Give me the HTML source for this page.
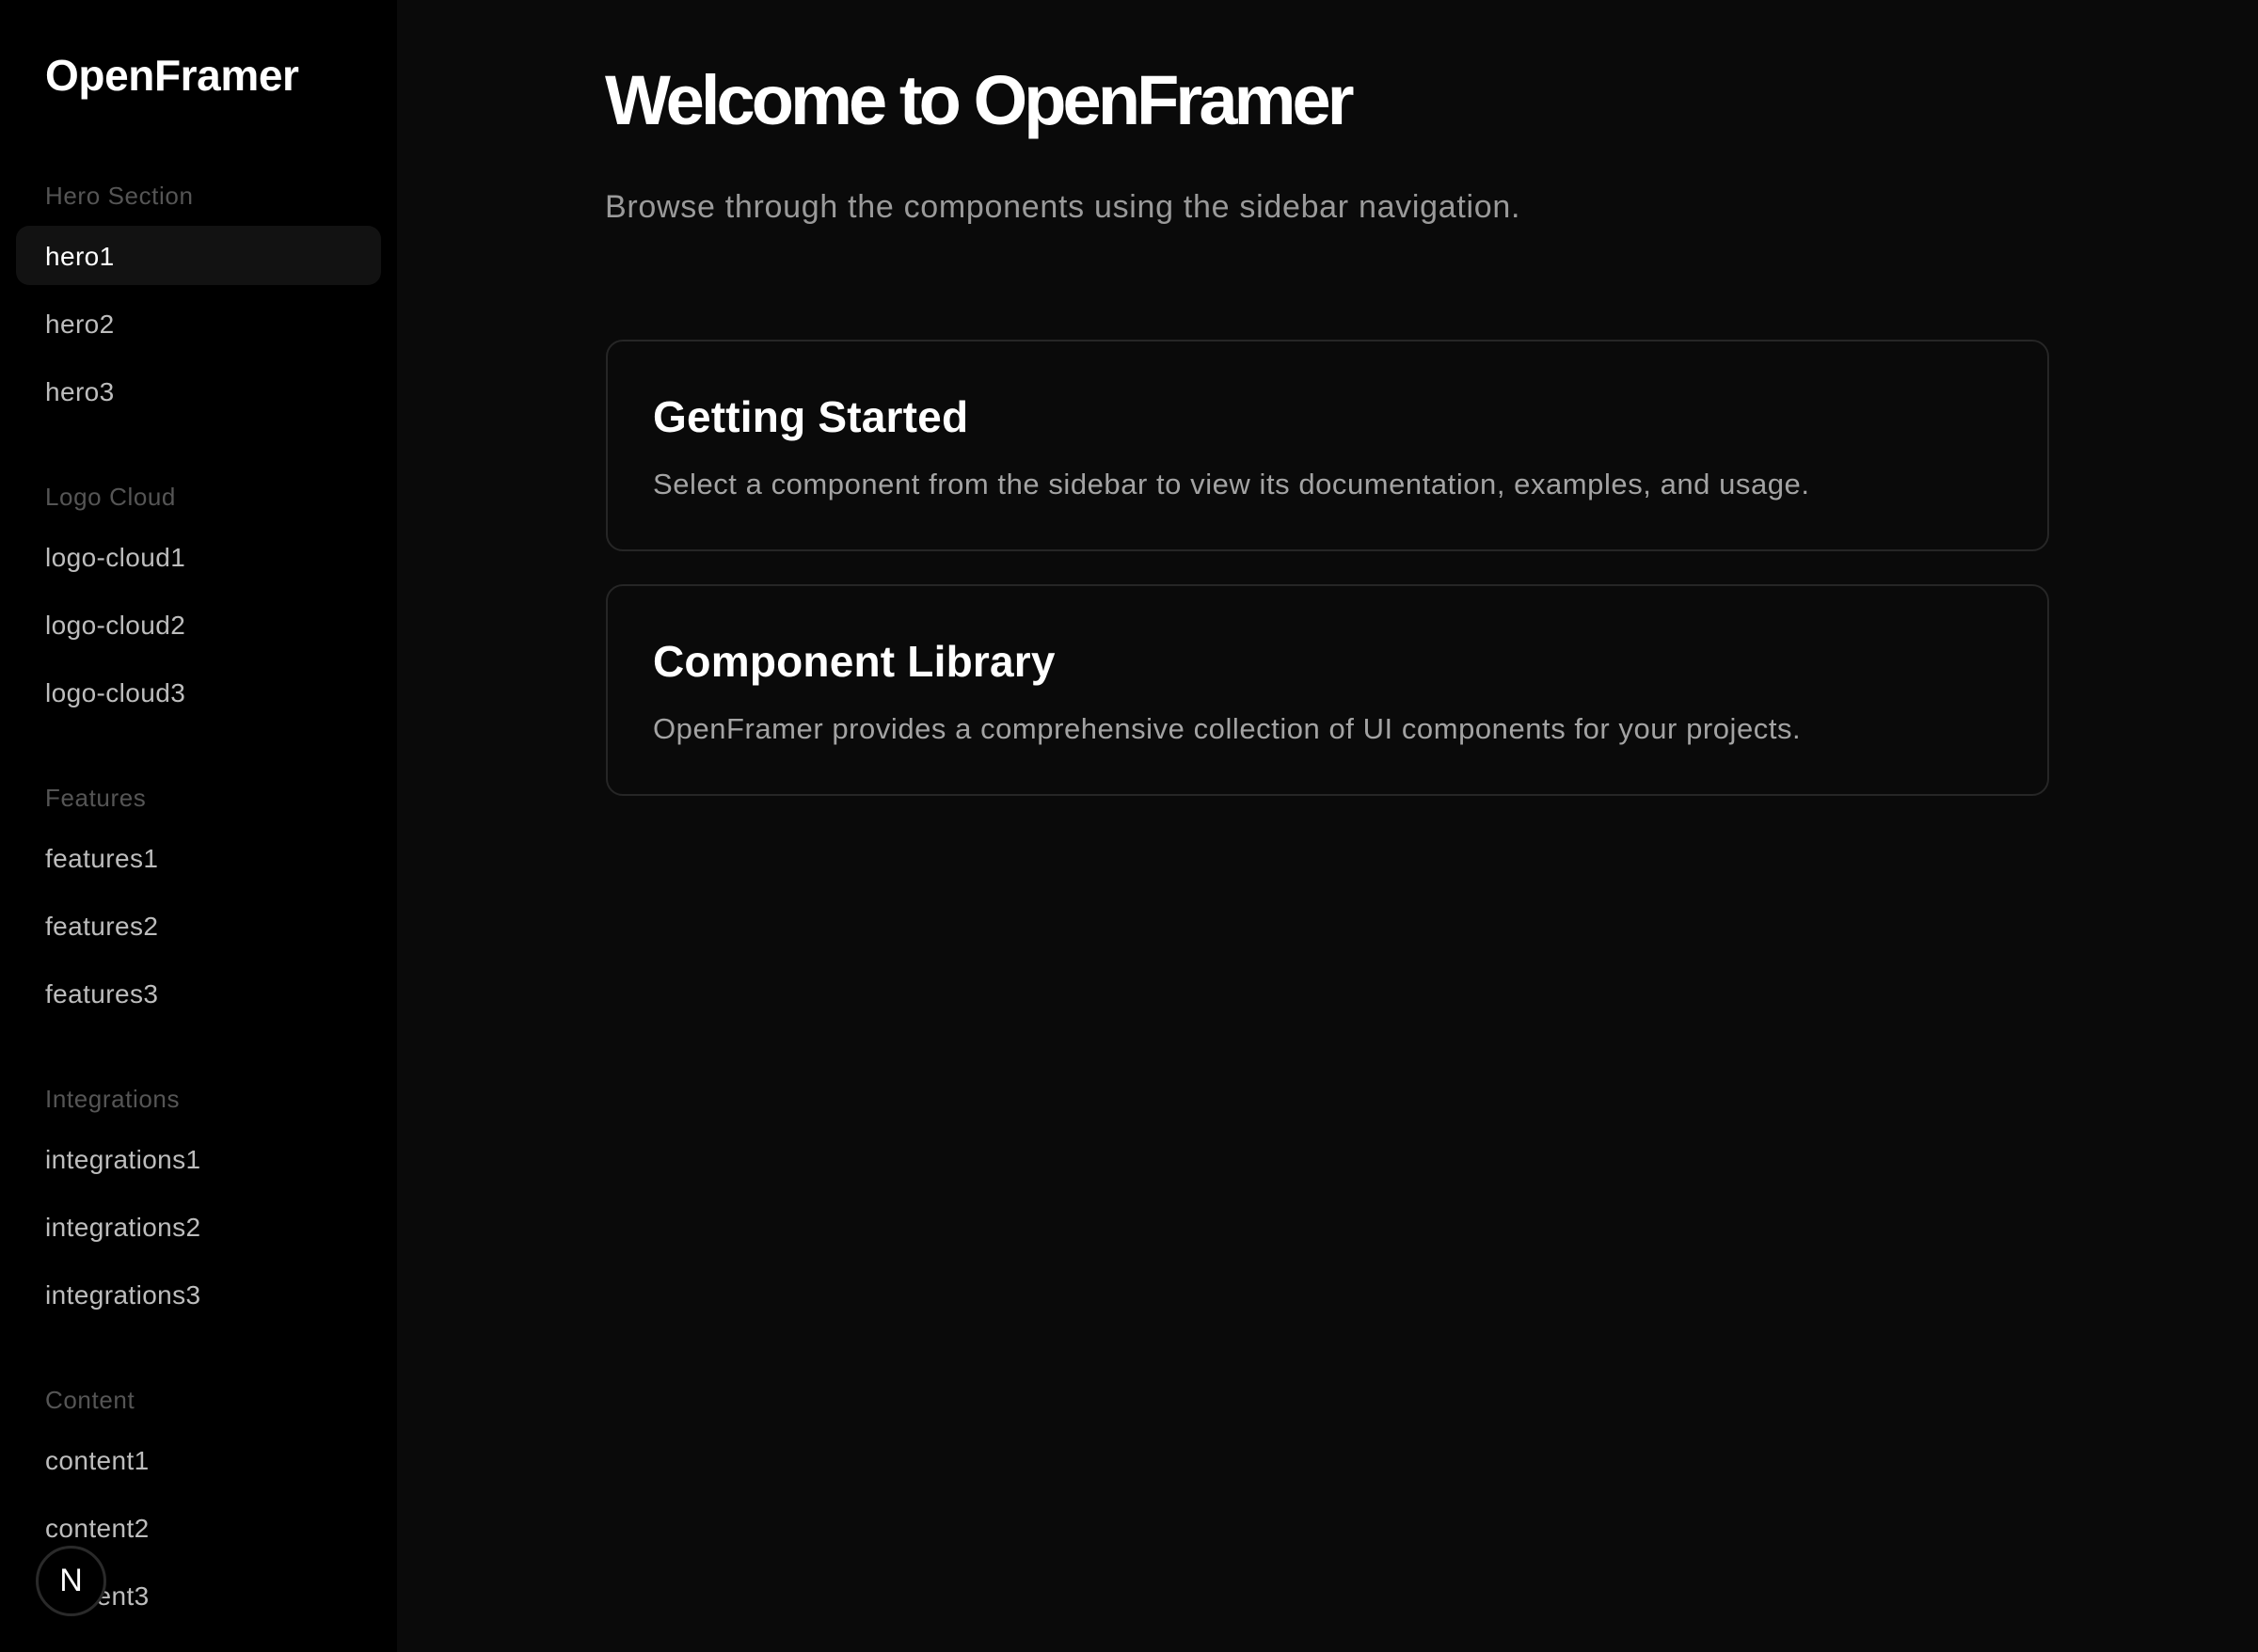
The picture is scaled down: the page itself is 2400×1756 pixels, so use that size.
<!DOCTYPE html>
<html><head><meta charset="utf-8"><style>
*{margin:0;padding:0;box-sizing:border-box}
body{width:2400px;height:1756px;background:#0a0a0a;font-family:"Liberation Sans",sans-serif;position:relative;overflow:hidden;color:#fff}
.side{position:absolute;left:0;top:0;width:422px;height:1756px;background:#000}
.t{position:absolute;white-space:nowrap;line-height:1}
.logo{left:48px;top:57px;font-size:46px;font-weight:bold;letter-spacing:-0.4px}
.lab{left:48px;font-size:26px;color:#555;letter-spacing:0.6px}
.it{left:48px;font-size:28px;color:#bdbdbd;letter-spacing:0.4px}
.act{position:absolute;left:17px;top:240px;width:388px;height:63px;background:#121212;border-radius:14px}
.card{position:absolute;left:644px;width:1534px;height:225px;border:2px solid #262626;border-radius:18px}
.ct{left:48px;font-size:46px;font-weight:bold;letter-spacing:0.2px}
.cd{left:48px;font-size:31px;color:#a3a3a3;letter-spacing:0.55px}
.badge{position:absolute;left:38px;top:1643px;width:75px;height:75px;border-radius:50%;background:#000;border:3px solid #2a2a2a;color:#fff;font-size:34px;display:flex;align-items:center;justify-content:center}
</style></head><body>
<div class="side">
<div class="t logo">OpenFramer</div>
<div class="act"></div>
<div class="t lab" style="top:195px">Hero Section</div>
<div class="t it" style="top:259px;color:#fff">hero1</div>
<div class="t it" style="top:331px">hero2</div>
<div class="t it" style="top:403px">hero3</div>
<div class="t lab" style="top:515px">Logo Cloud</div>
<div class="t it" style="top:579px">logo-cloud1</div>
<div class="t it" style="top:651px">logo-cloud2</div>
<div class="t it" style="top:723px">logo-cloud3</div>
<div class="t lab" style="top:835px">Features</div>
<div class="t it" style="top:899px">features1</div>
<div class="t it" style="top:971px">features2</div>
<div class="t it" style="top:1043px">features3</div>
<div class="t lab" style="top:1155px">Integrations</div>
<div class="t it" style="top:1219px">integrations1</div>
<div class="t it" style="top:1291px">integrations2</div>
<div class="t it" style="top:1363px">integrations3</div>
<div class="t lab" style="top:1475px">Content</div>
<div class="t it" style="top:1539px">content1</div>
<div class="t it" style="top:1611px">content2</div>
<div class="t it" style="top:1683px">content3</div>
<div class="badge">N</div>
</div>
<div class="t" style="left:643px;top:70px;font-size:74px;font-weight:bold;letter-spacing:-3.9px">Welcome to OpenFramer</div>
<div class="t" style="left:643px;top:203px;font-size:34px;color:#9a9a9a;letter-spacing:0.7px">Browse through the components using the sidebar navigation.</div>
<div class="card" style="top:361px">
<div class="t ct" style="top:57px">Getting Started</div>
<div class="t cd" style="top:136px">Select a component from the sidebar to view its documentation, examples, and usage.</div>
</div>
<div class="card" style="top:621px">
<div class="t ct" style="top:57px">Component Library</div>
<div class="t cd" style="top:136px">OpenFramer provides a comprehensive collection of UI components for your projects.</div>
</div>
</body></html>
